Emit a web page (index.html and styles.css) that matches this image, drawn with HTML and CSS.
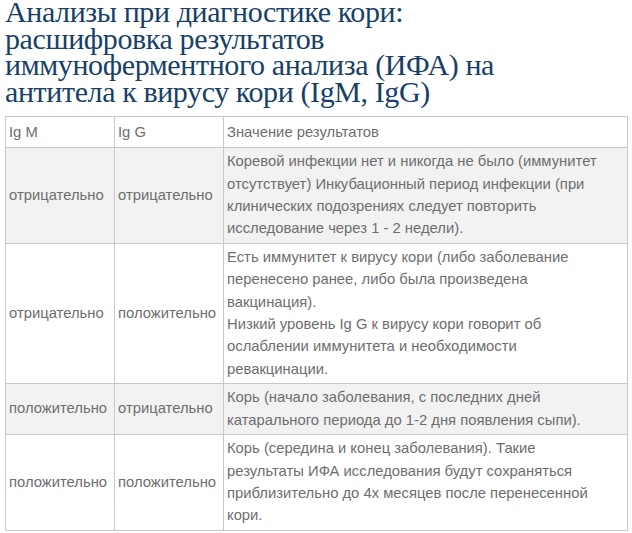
FILE: index.html
```html
<!DOCTYPE html>
<html lang="ru">
<head>
<meta charset="utf-8">
<link rel="stylesheet" href="styles.css">
</head>
<body>
<h1 class="title">Анализы при диагностике кори:<br>расшифровка результатов<br>иммуноферментного анализа (ИФА) на<br>антитела к вирусу кори (IgM, IgG)</h1>
<table class="results">
<colgroup><col class="c1"><col class="c2"><col class="c3"></colgroup>
<tr class="head"><td>Ig M</td><td>Ig G</td><td>Значение результатов</td></tr>
<tr class="alt"><td>отрицательно</td><td>отрицательно</td><td>Коревой инфекции нет и никогда не было (иммунитет отсутствует) Инкубационный период инфекции (при клинических подозрениях следует повторить исследование через 1 - 2 недели).</td></tr>
<tr><td>отрицательно</td><td>положительно</td><td>Есть иммунитет к вирусу кори (либо заболевание перенесено ранее, либо была произведена вакцинация).<br>Низкий уровень Ig G к вирусу кори говорит об ослаблении иммунитета и необходимости ревакцинации.</td></tr>
<tr class="alt"><td>положительно</td><td>отрицательно</td><td>Корь (начало заболевания, с последних дней катарального периода до 1-2 дня появления сыпи).</td></tr>
<tr><td>положительно</td><td>положительно</td><td>Корь (середина и конец заболевания). Такие результаты ИФА исследования будут сохраняться приблизительно до 4х месяцев после перенесенной кори.</td></tr>
</table>
</body>
</html>
```
FILE: styles.css
```css
html, body { margin: 0; padding: 0; background: #fff; }
body { padding: 0 4px 0 5px; }
.title {
  margin: -1px 0 0 0;
  font-family: "Liberation Serif", serif;
  font-weight: normal;
  font-size: 30px;
  line-height: 26.7px;
  color: #183f68;
  letter-spacing: -0.4px;
  white-space: nowrap;
}
.results {
  margin-top: 10px;
  width: 623px;
  border-collapse: collapse;
  font-family: "Liberation Sans", Arial, sans-serif;
  font-size: 14.8px;
  line-height: 22.4px;
  color: #6e6e6e;
}
.c1 { width: 109px; }
.c2 { width: 109px; }
.results td {
  border: 1px solid #c8c8c8;
  padding: 2px 3px 3px 3px;
  vertical-align: middle;
}
.results td:last-child { padding-right: 26px; }
.head td { padding-top: 4px; padding-bottom: 4px; }
.alt td { background: #f2f2f2; }
```
